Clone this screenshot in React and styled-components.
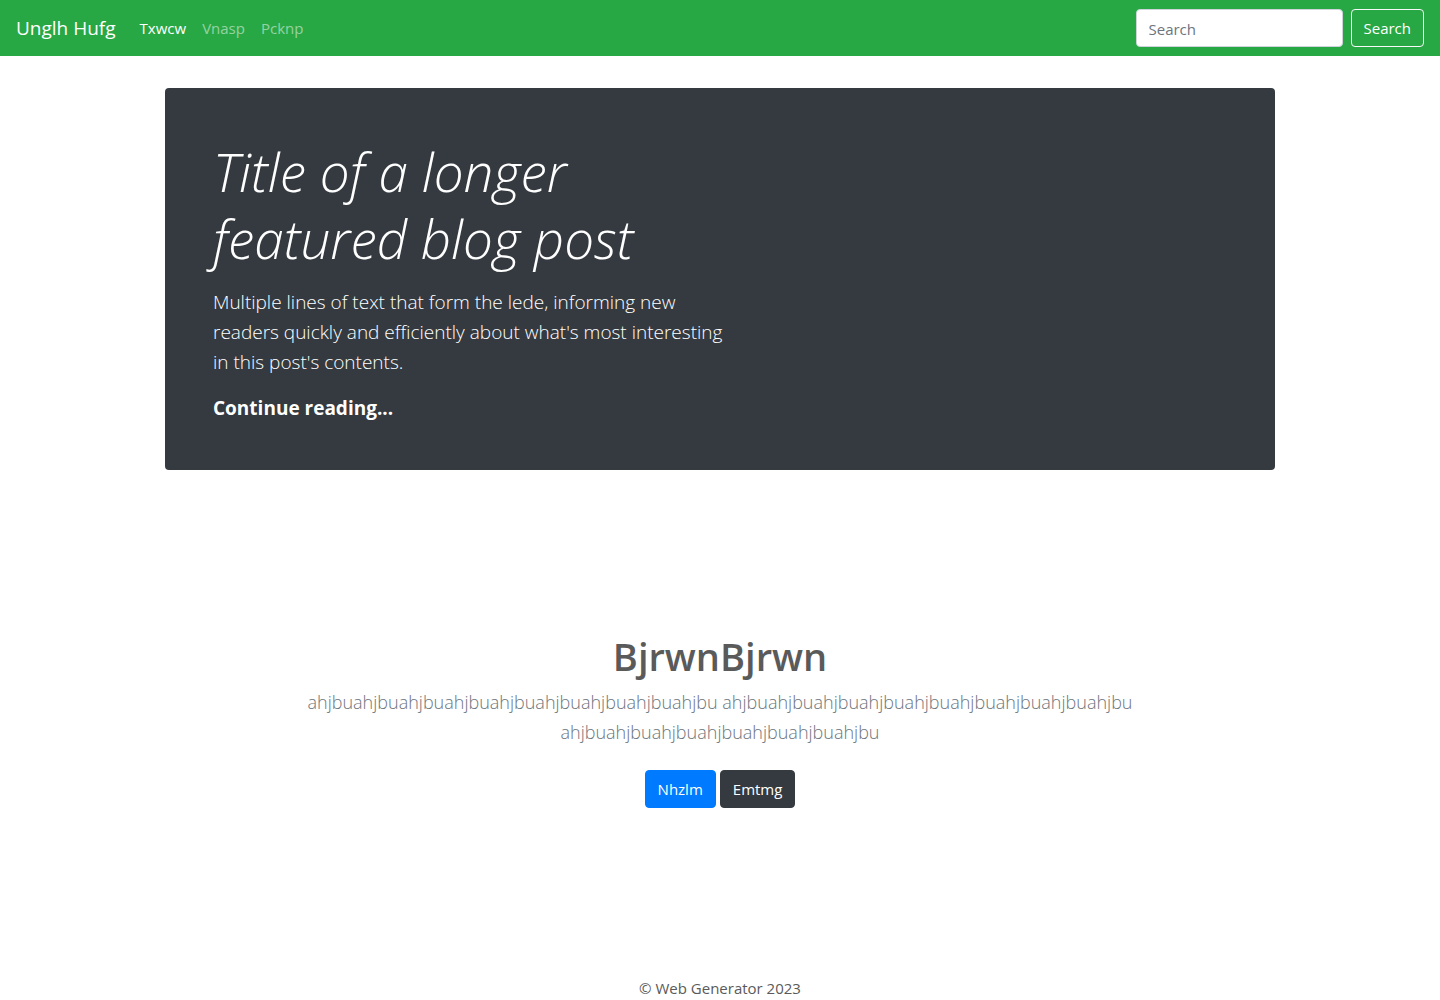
import React from "react";
import styled, { createGlobalStyle } from "styled-components";

const GlobalStyle = createGlobalStyle`
  *, *::before, *::after { box-sizing: border-box; }
  body {
    margin: 0;
    background: #fff;
    color: #5a5a5a;
    font-family: "Open Sans", "Noto Sans", sans-serif;
    font-size: 15px;
    line-height: 24px;
  }
  h1, h2, p { margin: 0; }
`;

const Navbar = styled.nav`
  display: flex;
  align-items: center;
  min-height: 56px;
  padding: 8px 16px;
  background: #28a745;
`;

const Brand = styled.a`
  margin-right: 16px;
  color: #fff;
  font-size: 19px;
  line-height: 30px;
  text-decoration: none;
`;

const NavList = styled.ul`
  display: flex;
  flex: 1;
  margin: 0;
  padding: 0;
  list-style: none;
`;

const NavLink = styled.a`
  display: block;
  padding: 8px;
  color: ${({ $active }) => ($active ? "#fff" : "rgba(255, 255, 255, 0.5)")};
  text-decoration: none;
`;

const SearchForm = styled.form`
  display: flex;
  gap: 8px;
`;

const SearchInput = styled.input`
  width: 207px;
  height: 38px;
  padding: 7px 12px 5px;
  border: 1px solid #ced4da;
  border-radius: 4px;
  background: #fff;
  color: #495057;
  font: inherit;
  &::placeholder { color: #6c757d; opacity: 1; }
`;

const Button = styled.button`
  height: 38px;
  padding: 6px 12px;
  border: 1px solid ${({ $border }) => $border};
  border-radius: 4px;
  background: ${({ $fill }) => $fill};
  color: #fff;
  font: inherit;
  cursor: pointer;
`;

const Container = styled.main`
  max-width: 1140px;
  margin: 0 auto;
  padding: 32px 15px 0;
`;

const Feature = styled.section`
  padding: 50px 48px 47px;
  border-radius: 4px;
  background: #343a40;
  color: #fff;
`;

const FeatureBody = styled.div`
  width: 51%;
`;

const FeatureTitle = styled.h1`
  margin-bottom: 15px;
  font-size: 53px;
  font-style: italic;
  font-weight: 300;
  line-height: 67px;
`;

const Lead = styled.p`
  font-size: 19px;
  font-weight: ${({ $strong }) => ($strong ? 700 : 300)};
  line-height: 30px;
  & + & { margin-top: 16px; }
`;

const FeatureLink = styled.a`
  color: #fff;
  text-decoration: none;
`;

const Intro = styled.section`
  margin-top: 64px;
  padding: 98px 112px 96px;
  text-align: center;
`;

const IntroTitle = styled.h2`
  font-size: 38px;
  font-weight: 600;
  line-height: 48px;
`;

const IntroText = styled.p`
  margin: 7px 0 23px;
  color: #6c757d;
  font-size: 18px;
  font-weight: 300;
  line-height: 30px;
`;

const Actions = styled.div`
  display: flex;
  justify-content: center;
  gap: 4px;
`;

const Footer = styled.footer`
  padding-top: 72px;
  text-align: center;
`;

export default function App() {
  return (
    <>
      <GlobalStyle />
      <Navbar>
        <Brand href="#">Unglh Hufg</Brand>
        <NavList>
          <li><NavLink href="#" $active>Txwcw</NavLink></li>
          <li><NavLink href="#">Vnasp</NavLink></li>
          <li><NavLink href="#">Pcknp</NavLink></li>
        </NavList>
        <SearchForm onSubmit={(e) => e.preventDefault()}>
          <SearchInput type="search" placeholder="Search" aria-label="Search" />
          <Button type="submit" $border="#f8f9fa" $fill="transparent">Search</Button>
        </SearchForm>
      </Navbar>
      <Container>
        <Feature>
          <FeatureBody>
            <FeatureTitle>Title of a longer featured blog post</FeatureTitle>
            <Lead>
              Multiple lines of text that form the lede, informing new readers quickly and
              efficiently about what's most interesting in this post's contents.
            </Lead>
            <Lead $strong><FeatureLink href="#">Continue reading...</FeatureLink></Lead>
          </FeatureBody>
        </Feature>
        <Intro>
          <IntroTitle>BjrwnBjrwn</IntroTitle>
          <IntroText>
            ahjbuahjbuahjbuahjbuahjbuahjbuahjbuahjbuahjbu ahjbuahjbuahjbuahjbuahjbuahjbuahjbuahjbuahjbu
            ahjbuahjbuahjbuahjbuahjbuahjbuahjbu
          </IntroText>
          <Actions>
            <Button type="button" $border="#007bff" $fill="#007bff">Nhzlm</Button>
            <Button type="button" $border="#343a40" $fill="#343a40">Emtmg</Button>
          </Actions>
        </Intro>
      </Container>
      <Footer>© Web Generator 2023</Footer>
    </>
  );
}
